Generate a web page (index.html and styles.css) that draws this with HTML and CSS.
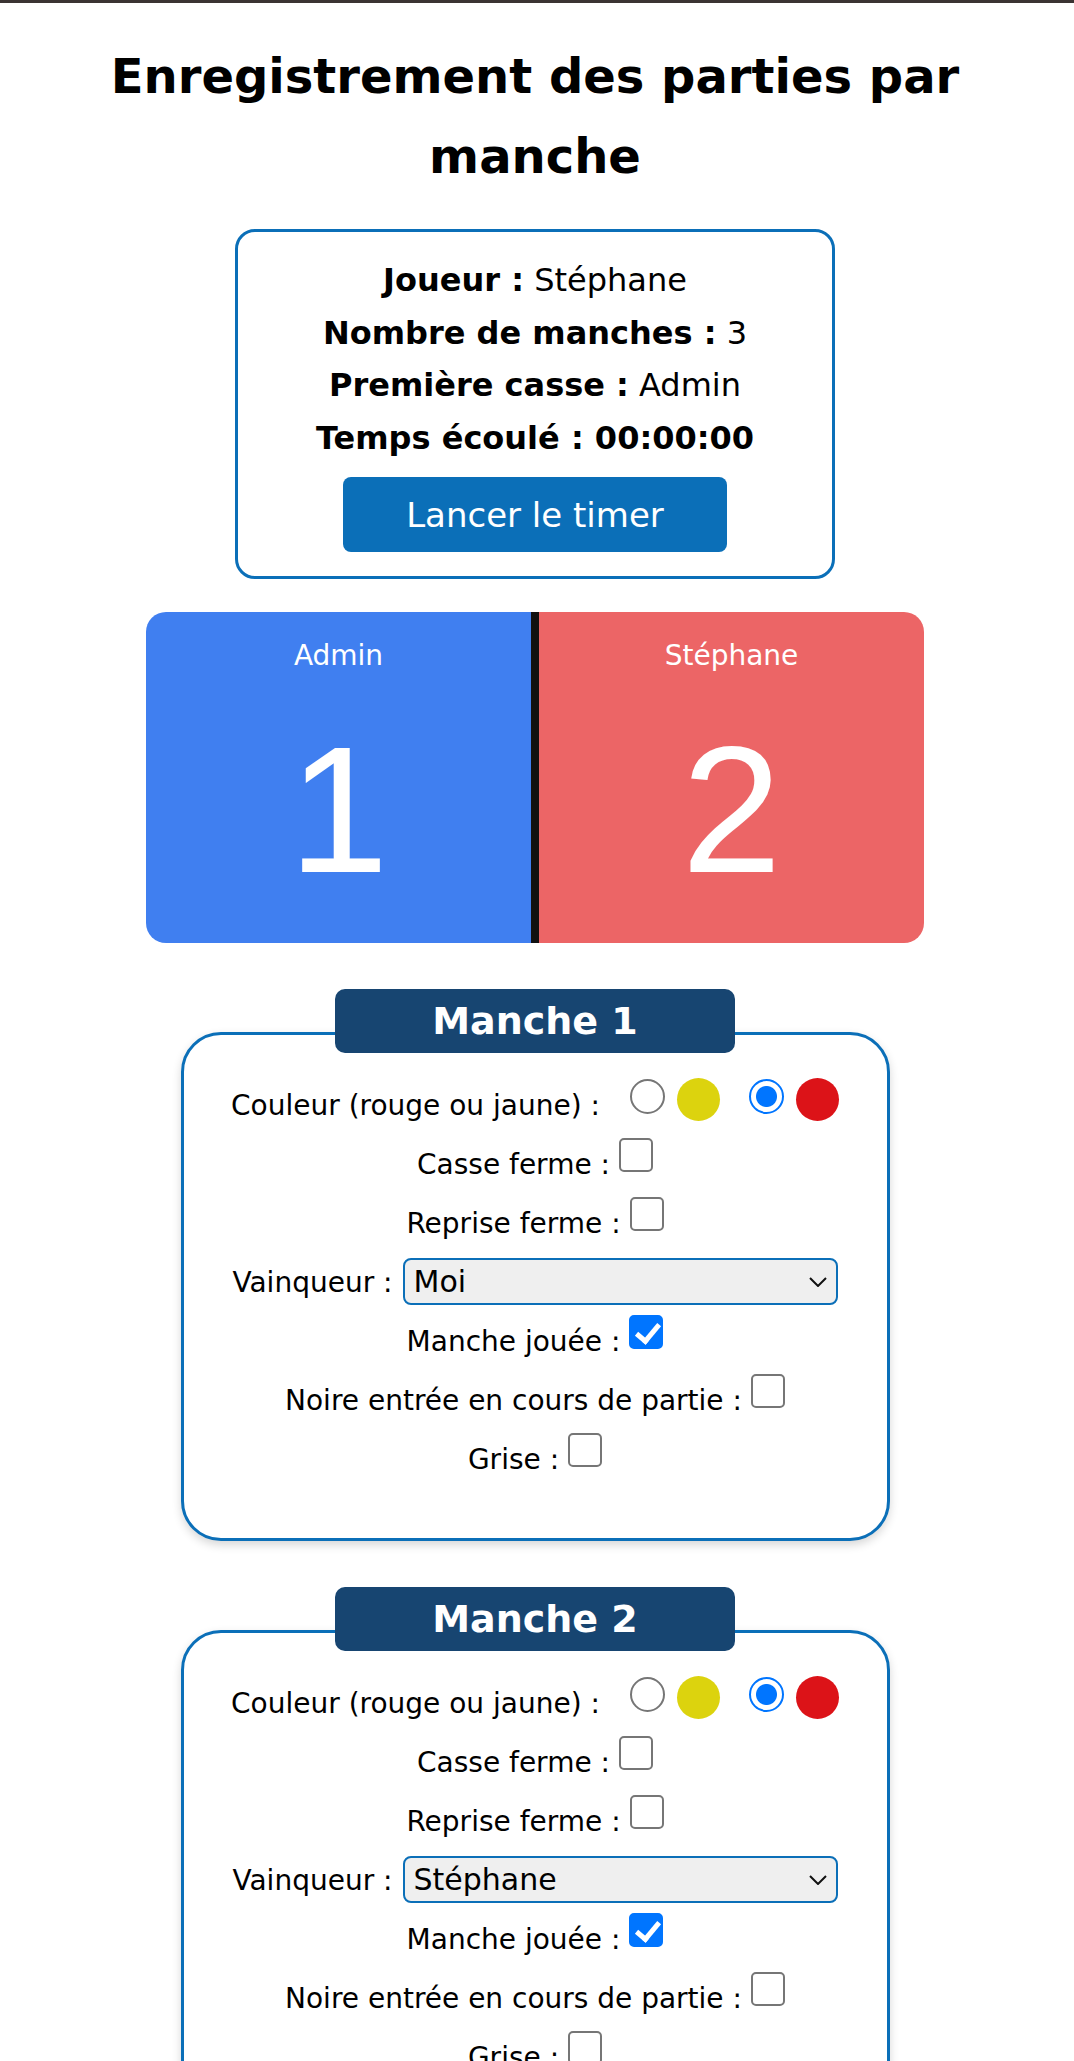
FILE: index.html
```html
<!DOCTYPE html>
<html lang="fr">
<head>
<meta charset="utf-8">
<title>Enregistrement des parties par manche</title>
<link rel="stylesheet" href="styles.css">
</head>
<body>
<div class="topbar"></div>
<main class="page">
  <h1 class="title">Enregistrement des parties par manche</h1>

  <section class="info">
    <p class="info-line"><strong>Joueur :</strong> Stéphane</p>
    <p class="info-line"><strong>Nombre de manches :</strong> 3</p>
    <p class="info-line"><strong>Première casse :</strong> Admin</p>
    <p class="info-line"><strong>Temps écoulé : 00:00:00</strong></p>
    <button class="timer-btn" type="button">Lancer le timer</button>
  </section>

  <section class="score">
    <div class="score-side score-blue">
      <div class="score-name">Admin</div>
      <div class="score-num">1</div>
    </div>
    <div class="score-divider"></div>
    <div class="score-side score-red">
      <div class="score-name">Stéphane</div>
      <div class="score-num">2</div>
    </div>
  </section>

  <section class="manche">
    <h2 class="manche-title">Manche 1</h2>
    <div class="manche-card">
      <div class="row">Couleur (rouge ou jaune) :<span class="pick pick-first"><input class="radio" type="radio" name="c1"><span class="dot dot-yellow"></span></span><span class="pick"><input class="radio" type="radio" name="c1" checked><span class="dot dot-red"></span></span></div>
      <div class="row">Casse ferme :<input class="check" type="checkbox"></div>
      <div class="row">Reprise ferme :<input class="check" type="checkbox"></div>
      <div class="row">Vainqueur :<span class="select-wrap"><select class="select"><option>Moi</option><option>Stéphane</option></select><svg class="chevron" width="18" height="10" viewBox="0 0 18 10"><path d="M1 1 L9 9 L17 1" fill="none" stroke="#111" stroke-width="2"/></svg></span></div>
      <div class="row">Manche jouée :<input class="check" type="checkbox" checked></div>
      <div class="row">Noire entrée en cours de partie :<input class="check" type="checkbox"></div>
      <div class="row">Grise :<input class="check" type="checkbox"></div>
    </div>
  </section>

  <section class="manche">
    <h2 class="manche-title">Manche 2</h2>
    <div class="manche-card">
      <div class="row">Couleur (rouge ou jaune) :<span class="pick pick-first"><input class="radio" type="radio" name="c2"><span class="dot dot-yellow"></span></span><span class="pick"><input class="radio" type="radio" name="c2" checked><span class="dot dot-red"></span></span></div>
      <div class="row">Casse ferme :<input class="check" type="checkbox"></div>
      <div class="row">Reprise ferme :<input class="check" type="checkbox"></div>
      <div class="row">Vainqueur :<span class="select-wrap"><select class="select"><option>Moi</option><option selected>Stéphane</option></select><svg class="chevron" width="18" height="10" viewBox="0 0 18 10"><path d="M1 1 L9 9 L17 1" fill="none" stroke="#111" stroke-width="2"/></svg></span></div>
      <div class="row">Manche jouée :<input class="check" type="checkbox" checked></div>
      <div class="row">Noire entrée en cours de partie :<input class="check" type="checkbox"></div>
      <div class="row">Grise :<input class="check" type="checkbox"></div>
    </div>
  </section>
</main>
</body>
</html>
```

FILE: styles.css
```css
* { box-sizing: border-box; }

html, body {
  margin: 0;
  padding: 0;
  background: #ffffff;
}

body {
  font-family: "DejaVu Sans", "Liberation Sans", sans-serif;
  color: #000;
}

.topbar {
  height: 3px;
  background: #3b3433;
}

.page {
  padding: 0 12px 60px 8px;
}

.title {
  margin: 33px auto 0;
  font-size: 48px;
  line-height: 80px;
  font-weight: 700;
  text-align: center;
}

/* Info box */
.info {
  width: 600px;
  margin: 33px auto 0;
  border: 3px solid #0b6fb8;
  border-radius: 20px;
  padding: 22px 20px 24px;
  text-align: center;
}

.info-line {
  margin: 0;
  font-size: 32px;
  line-height: 52.5px;
}

.timer-btn {
  display: block;
  width: 384px;
  height: 75px;
  margin: 13px auto 0;
  background: #0b6fb8;
  color: #fff;
  border: 0;
  border-radius: 8px;
  font-family: "DejaVu Sans", "Liberation Sans", sans-serif;
  font-size: 34px;
}

/* Scoreboard */
.score {
  display: flex;
  width: 778px;
  height: 331px;
  margin: 33px auto 0;
}

.score-side {
  flex: 1;
  padding-top: 27px;
  color: #fff;
  text-align: center;
}

.score-blue {
  background: #407ff0;
  border-radius: 20px 0 0 20px;
}

.score-red {
  background: #ec6566;
  border-radius: 0 20px 20px 0;
}

.score-divider {
  width: 8px;
  background: #111;
}

.score-name {
  font-size: 28px;
  line-height: 33px;
}

.score-num {
  margin-top: 35px;
  font-family: "Liberation Sans", "DejaVu Sans", sans-serif;
  font-size: 180px;
  line-height: 206px;
}

/* Manche cards */
.manche {
  margin-top: 46px;
}

.manche-title {
  position: relative;
  z-index: 1;
  width: 400px;
  height: 64px;
  margin: 0 auto -21px;
  background: #174571;
  color: #fff;
  border-radius: 10px;
  font-size: 38px;
  line-height: 64px;
  font-weight: 700;
  text-align: center;
}

.manche-card {
  width: 709px;
  margin: 0 auto;
  border: 3px solid #0b6fb8;
  border-radius: 40px;
  padding: 41px 0 49px;
  background: #fff;
  box-shadow: 0 4px 10px rgba(0, 0, 0, 0.16);
  text-align: center;
  font-size: 28px;
}

.row {
  height: 59px;
  line-height: 59px;
  white-space: nowrap;
}

.pick {
  display: inline;
  margin-left: 30px;
}

.pick-first {
  margin-left: 30px;
}

.pick + .pick {
  margin-left: 29px;
}

.radio {
  -webkit-appearance: none;
  appearance: none;
  display: inline-block;
  width: 35px;
  height: 35px;
  margin: 0 0 1px 0;
  border: 2.5px solid #767676;
  border-radius: 50%;
  background: #fff;
  vertical-align: baseline;
}

.radio:checked {
  border-color: #0075ff;
  background: radial-gradient(circle at center, #0075ff 0, #0075ff 10px, #fff 11px);
}

.dot {
  display: inline-block;
  width: 43px;
  height: 43px;
  margin-left: 12px;
  border-radius: 50%;
  vertical-align: -6px;
}

.dot-yellow { background: #dcd30e; }
.dot-red { background: #dc1318; }

.check {
  -webkit-appearance: none;
  appearance: none;
  position: relative;
  display: inline-block;
  width: 34px;
  height: 34px;
  margin: 0 0 2px 9px;
  border: 2.5px solid #767676;
  border-radius: 5px;
  background: #fff;
  vertical-align: baseline;
}

.check:checked {
  border-color: #0075ff;
  background: #0075ff;
}

.check:checked::after {
  content: "";
  position: absolute;
  left: 10px;
  top: 2px;
  width: 9px;
  height: 19px;
  border-right: 5px solid #fff;
  border-bottom: 5px solid #fff;
  transform: rotate(40deg);
}

.select-wrap {
  position: relative;
  display: inline-block;
  margin-left: 10px;
  vertical-align: baseline;
  line-height: normal;
}

.select {
  -webkit-appearance: none;
  appearance: none;
  display: block;
  width: 435px;
  height: 47px;
  margin: 0;
  padding: 0 40px 0 9px;
  border: 2px solid #0b6fb8;
  border-radius: 8px;
  background: #efefef;
  color: #000;
  font-family: "DejaVu Sans", "Liberation Sans", sans-serif;
  font-size: 30px;
}

.chevron {
  position: absolute;
  right: 11px;
  top: 19px;
  pointer-events: none;
}
```
